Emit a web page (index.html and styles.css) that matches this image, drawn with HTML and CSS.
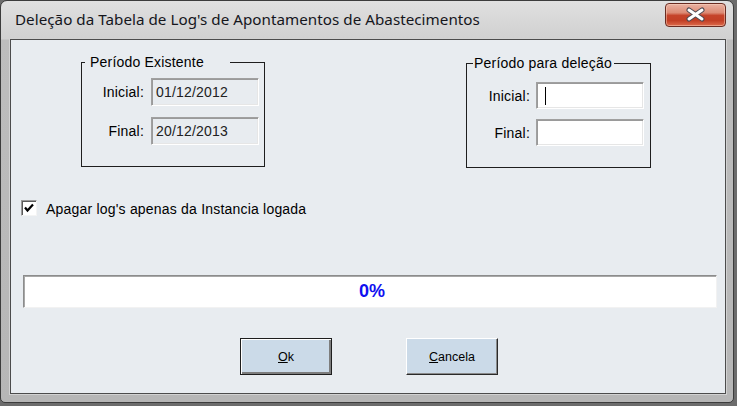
FILE: index.html
```html
<!DOCTYPE html>
<html lang="pt">
<head>
<meta charset="utf-8">
<title>Deleção da Tabela de Log's</title>
<link rel="stylesheet" href="styles.css">
</head>
<body>
<div class="window">
  <div class="titlebar">
    <div class="title">Deleção da Tabela de Log's de Apontamentos de Abastecimentos</div>
    <div class="close">
      <svg width="59" height="22" viewBox="0 0 59 22">
        <path d="M23 6 L36 15 M36 6 L23 15" stroke="#4e4a52" stroke-width="5" stroke-linecap="round" fill="none"/>
        <path d="M23 6 L36 15 M36 6 L23 15" stroke="#ffffff" stroke-width="3" stroke-linecap="round" fill="none"/>
      </svg>
    </div>
  </div>
  <div class="client">
    <div class="groups">
      <fieldset class="group group-existente">
        <legend>Período Existente</legend>
        <div class="fields">
          <span class="lbl">Inicial:</span><span class="field">01/12/2012</span>
          <span class="lbl">Final:</span><span class="field">20/12/2013</span>
        </div>
      </fieldset>
      <fieldset class="group group-delecao">
        <legend>Período para deleção</legend>
        <div class="fields">
          <span class="lbl">Inicial:</span><span class="field editable"><span class="caret"></span></span>
          <span class="lbl">Final:</span><span class="field editable"></span>
        </div>
      </fieldset>
    </div>
    <div class="check-row">
      <span class="checkbox">
        <svg width="12" height="12" viewBox="0 0 12 12"><path d="M2 5.5 L4.5 8.5 L10 2.5" stroke="#000" stroke-width="2.2" fill="none"/></svg>
      </span>
      <span class="check-label">Apagar log's apenas da Instancia logada</span>
    </div>
    <div class="progress"><span>0%</span></div>
    <div class="buttons">
      <button class="btn btn-default"><u>O</u>k</button>
      <button class="btn"><u>C</u>ancela</button>
    </div>
  </div>
</div>
</body>
</html>
```

FILE: styles.css
```css
* { box-sizing: border-box; }
html, body { margin: 0; padding: 0; }
body {
  width: 737px;
  height: 406px;
  overflow: hidden;
  background: #6c6c6c;
  font-family: "Liberation Sans", Arial, sans-serif;
  color: #000;
}
.window {
  width: 734px;
  height: 403px;
  border: 1px solid #3c3c3c;
  border-radius: 7px 7px 5px 5px;
  background: linear-gradient(to bottom, #e0e0e0 0px, #d0d0d0 38px, #bdbdbd 39px, #b6b6b6 100%);
  display: flex;
  flex-direction: column;
}
.titlebar {
  height: 38px;
  display: flex;
  justify-content: space-between;
  align-items: flex-start;
  padding: 0 7px 0 14px;
}
.title {
  font-family: "Noto Sans", "Open Sans", sans-serif;
  font-size: 15.2px;
  letter-spacing: 0.03px;
  line-height: 20px;
  margin-top: 8px;
  color: #15161c;
}
.close {
  width: 61px;
  height: 24px;
  margin-top: 2px;
  border: 1px solid #6a2c22;
  border-radius: 4px;
  background: linear-gradient(to bottom, #e9b2a2 0%, #dc8a74 40%, #c5432a 52%, #c23f25 75%, #dd6b4c 100%);
  box-shadow: inset 0 0 0 1px rgba(255,220,200,0.45);
  display: flex;
  align-items: center;
  justify-content: center;
}
.close svg { display: block; }
.client {
  margin: 0 7px 0 9px;
  height: 355px;
  border: 1px solid #4c4c4c;
  background: #e8ecf0;
  box-shadow: 0 0 0 1px #d2d2d2;
  display: flex;
  flex-direction: column;
}
.groups {
  display: flex;
  align-items: flex-start;
  gap: 201px;
  padding-left: 70px;
  margin-top: 14px;
}
.group {
  margin: 0;
  border: 1px solid #1e1e1e;
  padding: 0 5px 21px 0;
  min-width: 0;
}
.group legend {
  font-size: 14px;
  line-height: 16px;
  letter-spacing: 0.2px;
  color: #000;
}
.group-existente { width: 184px; }
.group-existente legend { margin-left: 3px; padding: 0 26px 0 5px; }
.group-delecao { width: 185px; padding-right: 6px; margin-top: 1px; }
.group-delecao legend { margin-left: 6px; padding: 0 2px 0 1px; }
.fields {
  display: grid;
  grid-template-columns: 62px 108px;
  column-gap: 7px;
  row-gap: 11px;
  align-items: center;
  padding-top: 8px;
}
.group-delecao .fields {
  grid-template-columns: 63px 108px;
  column-gap: 6px;
  row-gap: 10px;
  padding-top: 11px;
}
.lbl {
  text-align: right;
  font-size: 14px;
  letter-spacing: 0.2px;
}
.field {
  height: 28px;
  border: 1px solid;
  border-color: #a0a0a0 #ffffff #ffffff #a0a0a0;
  box-shadow: inset 1px 1px 0 #9a9a9a, inset -1px -1px 0 #e6e6e6;
  background: #e8ecf0;
  font-size: 14px;
  letter-spacing: 0.2px;
  color: #222;
  padding-left: 4px;
  display: flex;
  align-items: center;
}
.field.editable {
  height: 27px;
  background: #ffffff;
}
.caret {
  width: 1px;
  height: 18px;
  background: #000;
  margin-left: 4px;
}
.check-row {
  display: flex;
  align-items: center;
  gap: 9px;
  margin: 31px 0 0 10px;
}
.checkbox {
  width: 16px;
  height: 16px;
  border: 1px solid;
  border-color: #9a9a9a #f4f4f4 #f4f4f4 #9a9a9a;
  box-shadow: inset 1px 1px 0 #5a5a5a;
  background: #fff;
  display: flex;
  align-items: center;
  justify-content: center;
}
.checkbox svg { display: block; }
.check-label {
  font-size: 14px;
  letter-spacing: 0.2px;
  padding-top: 2px;
}
.progress {
  margin: 58px 0 0 12px;
  width: 694px;
  height: 33px;
  border: 1px solid;
  border-color: #8c8c8c #f2f2f2 #f2f2f2 #8c8c8c;
  box-shadow: inset 1px 1px 0 #a8a8a8;
  background: #fff;
  display: flex;
  align-items: center;
  justify-content: center;
}
.progress span {
  font-family: "Liberation Sans Narrow", "Liberation Sans", Arial, sans-serif;
  font-weight: bold;
  font-size: 18px;
  color: #1010f0;
  margin-left: 4px;
}
.buttons {
  display: flex;
  gap: 74px;
  padding-left: 229px;
  margin-top: 30px;
}
.btn {
  width: 92px;
  height: 37px;
  margin: 0;
  padding: 0;
  font-family: "Liberation Sans", Arial, sans-serif;
  font-size: 12.5px;
  color: #000;
  background: #cbdae8;
  border: 1px solid;
  border-color: #ffffff #2a2a2a #2a2a2a #ffffff;
  box-shadow: inset -1px -1px 0 #8a8a8a;
}
.btn u { text-decoration: underline; }
.btn-default {
  border: 1px solid #1e1e1e;
  box-shadow: inset 1px 1px 0 #ffffff, inset -2px -2px 0 #7d7d7d;
}
```
